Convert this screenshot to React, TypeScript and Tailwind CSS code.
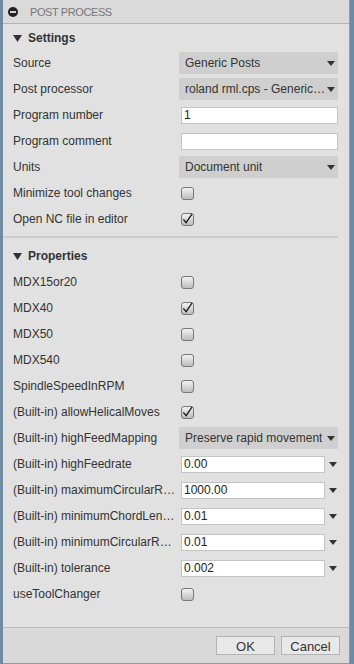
import type { ReactNode } from "react";

const FONT = "font-['Liberation_Sans',Arial,sans-serif]";

function Arrow() {
  return (
    <svg width="8" height="5" viewBox="0 0 8 5" className="shrink-0">
      <path d="M0 0h8L4 5z" fill="#333" />
    </svg>
  );
}

function Select({ value }: { value: string }) {
  return (
    <div className="ml-[-2px] flex h-[22px] w-[159px] items-center justify-between bg-[#cfcfcf] pl-[6px] pr-[3px]">
      <span className="overflow-hidden whitespace-nowrap text-[12px] text-[#333]">{value}</span>
      <Arrow />
    </div>
  );
}

function TextInput({ value = "" }: { value?: string }) {
  return (
    <div className="flex h-[17px] w-[157px] items-center border border-[#c4c4c4] bg-white px-[2px] text-[12px] leading-none text-[#222]">
      {value}
    </div>
  );
}

function NumberInput({ value }: { value: string }) {
  return (
    <div className="flex w-[157px] items-center gap-[4px]">
      <div className="flex h-[17px] w-[144px] items-center border border-[#c4c4c4] bg-white px-[2px] text-[12px] leading-none text-[#222]">
        {value}
      </div>
      <Arrow />
    </div>
  );
}

function Check({ on = false }: { on?: boolean }) {
  return (
    <div className="flex h-[13px] w-[13px] items-center justify-center rounded-[3px] border border-[#777] bg-gradient-to-b from-[#f2f2f2] to-[#bdbdbd]">
      {on && (
        <svg width="12" height="12" viewBox="0 0 12 12">
          <path d="M1.5 6.5l3 3.5L11 0.5" stroke="#111" strokeWidth="1.3" fill="none" />
        </svg>
      )}
    </div>
  );
}

function Row({ label, children }: { label: string; children?: ReactNode }) {
  return (
    <div className="flex h-[26px] items-center">
      <div className="w-[178px] shrink-0 pl-[10px] pr-[4px]">
        <div className="truncate text-[12px] text-[#333]">{label}</div>
      </div>
      {children}
    </div>
  );
}

function Section({ title }: { title: string }) {
  return (
    <div className="flex h-[26px] items-center gap-[6px] pl-[10px]">
      <svg width="9" height="7" viewBox="0 0 9 7">
        <path d="M0 0h9L4.5 7z" fill="#333" />
      </svg>
      <span className="text-[12px] font-bold text-[#333]">{title}</span>
    </div>
  );
}

export default function App() {
  return (
    <div className={`flex h-[664px] w-[354px] bg-[#6f8aa3] ${FONT}`}>
      <div className="ml-[3px] flex w-[347px] flex-col border-r border-b border-[#9a9a9a] bg-[#e1e1e1]">
        <div className="flex h-[24px] items-center gap-[12px] border-b border-[#b5b5b5] bg-[#dadada] pl-[5px] pt-[1px]">
          <svg width="10" height="10" viewBox="0 0 10 10">
            <circle cx="5" cy="5" r="5" fill="#222" />
            <rect x="2" y="4.2" width="6" height="1.6" fill="#fff" />
          </svg>
          <span className="text-[11px] tracking-[-0.4px] text-[#777]">POST PROCESS</span>
        </div>

        <div className="pt-[1px]">
          <Section title="Settings" />
        </div>
        <div className="-mt-[1px]" />
        <Row label="Source">
          <Select value="Generic Posts" />
        </Row>
        <Row label="Post processor">
          <Select value="roland rml.cps - Generic…" />
        </Row>
        <Row label="Program number">
          <TextInput value="1" />
        </Row>
        <Row label="Program comment">
          <TextInput />
        </Row>
        <Row label="Units">
          <Select value="Document unit" />
        </Row>
        <Row label="Minimize tool changes">
          <Check />
        </Row>
        <Row label="Open NC file in editor">
          <Check on />
        </Row>

        <div className="mt-[4px] mb-[5px] h-[2px] w-[335px] bg-[#cbcbcb]" />

        <Section title="Properties" />
        <Row label="MDX15or20">
          <Check />
        </Row>
        <Row label="MDX40">
          <Check on />
        </Row>
        <Row label="MDX50">
          <Check />
        </Row>
        <Row label="MDX540">
          <Check />
        </Row>
        <Row label="SpindleSpeedInRPM">
          <Check />
        </Row>
        <Row label="(Built-in) allowHelicalMoves">
          <Check on />
        </Row>
        <Row label="(Built-in) highFeedMapping">
          <Select value="Preserve rapid movement" />
        </Row>
        <Row label="(Built-in) highFeedrate">
          <NumberInput value="0.00" />
        </Row>
        <Row label="(Built-in) maximumCircularRadius">
          <NumberInput value="1000.00" />
        </Row>
        <Row label="(Built-in) minimumChordLength">
          <NumberInput value="0.01" />
        </Row>
        <Row label="(Built-in) minimumCircularRadius">
          <NumberInput value="0.01" />
        </Row>
        <Row label="(Built-in) tolerance">
          <NumberInput value="0.002" />
        </Row>
        <Row label="useToolChanger">
          <Check />
        </Row>

        <div className="mt-auto flex h-[36px] items-center justify-end gap-[6px] border-t border-[#b8b8b8] bg-[#d9d9d9] pr-[9px]">
          <button className="h-[19px] w-[59px] border border-[#b3b3b3] bg-[#e8e8e8] text-[13px] text-[#333]">OK</button>
          <button className="h-[19px] w-[59px] border border-[#b3b3b3] bg-[#e8e8e8] text-[13px] text-[#333]">Cancel</button>
        </div>
      </div>
    </div>
  );
}
